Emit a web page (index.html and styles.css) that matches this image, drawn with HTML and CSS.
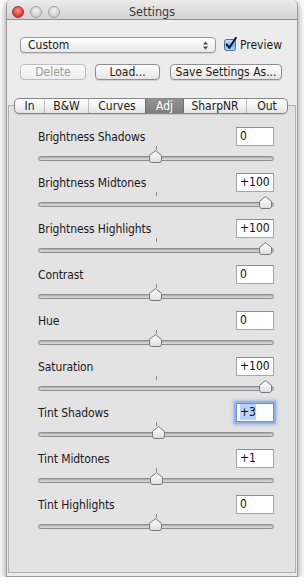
FILE: index.html
```html
<!DOCTYPE html>
<html>
<head>
<meta charset="utf-8">
<link rel="stylesheet" href="styles.css">
</head>
<body>
<svg class="defs" width="0" height="0">
  <defs>
    <linearGradient id="tg" x1="0" y1="0" x2="0" y2="1">
      <stop offset="0" stop-color="#ffffff"/>
      <stop offset="1" stop-color="#dedede"/>
    </linearGradient>
    <symbol id="thumb" viewBox="0 0 13 13">
      <path d="M6.5 0.6 L12.5 5.4 L12.5 10.2 Q12.5 12.5 10.2 12.5 L2.8 12.5 Q0.5 12.5 0.5 10.2 L0.5 5.4 Z" fill="url(#tg)" stroke="#777"/>
    </symbol>
  </defs>
</svg>
<div class="window">
  <div class="titlebar">
    <div class="lights">
      <span class="light close"></span>
      <span class="light"></span>
      <span class="light"></span>
    </div>
    <div class="title">Settings</div>
    <div></div>
  </div>
  <div class="top">
    <div class="popup">
      <span>Custom</span>
      <svg class="arrows" width="7" height="9" viewBox="0 0 7 9"><path d="M3.5 0.5 L6 3.5 L1 3.5 Z M3.5 8.5 L6 5.5 L1 5.5 Z" fill="#444"/></svg>
    </div>
    <div class="check">
      <svg class="cbox" width="14" height="14" viewBox="0 0 14 14">
        <defs>
          <linearGradient id="cg" x1="0" y1="0" x2="0" y2="1">
            <stop offset="0" stop-color="#cfe3fa"/>
            <stop offset="0.5" stop-color="#7fb2ee"/>
            <stop offset="1" stop-color="#a9d2fb"/>
          </linearGradient>
        </defs>
        <rect x="0.5" y="2.5" width="11" height="11" rx="2" fill="url(#cg)" stroke="#4a6fa5"/>
        <path d="M2.8 7.6 L5.4 10.8 L11.8 1" fill="none" stroke="#0d1a33" stroke-width="2.1" stroke-linecap="round" stroke-linejoin="round"/>
      </svg>
      <span>Preview</span>
    </div>
  </div>
  <div class="buttons">
    <span class="btn del disabled">Delete</span>
    <span class="btn load">Load...</span>
    <span class="btn save">Save Settings As...</span>
  </div>
  <div class="tabs">
    <span class="tab t-in">In</span>
    <span class="tab t-bw">B&amp;W</span>
    <span class="tab t-curves">Curves</span>
    <span class="tab t-adj sel">Adj</span>
    <span class="tab t-sharp">SharpNR</span>
    <span class="tab t-out">Out</span>
  </div>
  <div class="group">
    <div class="row">
      <div class="head"><span class="label">Brightness Shadows</span><span class="field">0</span></div>
      <div class="slider"><span class="tick"></span><div class="track"></div><svg class="thumb" style="left:111px"><use href="#thumb"/></svg></div>
    </div>
    <div class="row">
      <div class="head"><span class="label">Brightness Midtones</span><span class="field">+100</span></div>
      <div class="slider"><span class="tick"></span><div class="track"></div><svg class="thumb" style="left:221px"><use href="#thumb"/></svg></div>
    </div>
    <div class="row">
      <div class="head"><span class="label">Brightness Highlights</span><span class="field">+100</span></div>
      <div class="slider"><span class="tick"></span><div class="track"></div><svg class="thumb" style="left:221px"><use href="#thumb"/></svg></div>
    </div>
    <div class="row">
      <div class="head"><span class="label">Contrast</span><span class="field">0</span></div>
      <div class="slider"><span class="tick"></span><div class="track"></div><svg class="thumb" style="left:111px"><use href="#thumb"/></svg></div>
    </div>
    <div class="row">
      <div class="head"><span class="label">Hue</span><span class="field">0</span></div>
      <div class="slider"><span class="tick"></span><div class="track"></div><svg class="thumb" style="left:111px"><use href="#thumb"/></svg></div>
    </div>
    <div class="row">
      <div class="head"><span class="label">Saturation</span><span class="field">+100</span></div>
      <div class="slider"><span class="tick"></span><div class="track"></div><svg class="thumb" style="left:221px"><use href="#thumb"/></svg></div>
    </div>
    <div class="row">
      <div class="head"><span class="label">Tint Shadows</span><span class="field focus"><span class="selection">+3</span></span></div>
      <div class="slider"><span class="tick"></span><div class="track"></div><svg class="thumb" style="left:114px"><use href="#thumb"/></svg></div>
    </div>
    <div class="row">
      <div class="head"><span class="label">Tint Midtones</span><span class="field">+1</span></div>
      <div class="slider"><span class="tick"></span><div class="track"></div><svg class="thumb" style="left:112px"><use href="#thumb"/></svg></div>
    </div>
    <div class="row">
      <div class="head"><span class="label">Tint Highlights</span><span class="field">0</span></div>
      <div class="slider"><span class="tick"></span><div class="track"></div><svg class="thumb" style="left:111px"><use href="#thumb"/></svg></div>
    </div>
  </div>
</div>
</body>
</html>
```

FILE: styles.css
```css
* { box-sizing: border-box; }
html, body { margin: 0; padding: 0; background: #fff; }
body {
  font-family: "DejaVu Sans Condensed", "DejaVu Sans", sans-serif;
  font-stretch: condensed;
  font-size: 12px;
  color: #1a1a1a;
}
.defs { position: absolute; width: 0; height: 0; overflow: hidden; }
.window {
  margin-left: 6px;
  width: 292px;
  border: 1px solid #9a9a9a;
  border-top: 0;
  border-radius: 5px 5px 0 0;
  background: #ececec;
  box-shadow: 0 3px 9px rgba(0,0,0,0.45);
  padding-bottom: 3px;
  overflow: hidden;
}
.titlebar {
  height: 20px;
  border-bottom: 1px solid #8f8f8f;
  background: linear-gradient(#ececec, #d3d3d3);
  display: grid;
  grid-template-columns: 1fr auto 1fr;
  align-items: start;
  padding-top: 6px;
}
.lights { display: flex; gap: 6px; padding-left: 5px; }
.light {
  width: 12px; height: 12px; border-radius: 50%;
  background: radial-gradient(circle at 50% 35%, #f4f4f4 0%, #d6d6d6 55%, #c2c2c2 100%);
  border: 1px solid #a2a2a2;
}
.light.close {
  background: radial-gradient(circle at 50% 35%, #ff9a90 0%, #e8453c 55%, #c92a22 100%);
  border-color: #a8302a;
}
.title {
  font-size: 12.5px;
  line-height: 12px;
  color: #3a3a3a;
}
.top {
  display: flex;
  align-items: center;
  padding: 17px 0 0 13px;
}
.popup {
  width: 196px;
  height: 16px;
  border: 1px solid #999;
  border-radius: 4px;
  background: linear-gradient(#ffffff, #f3f3f3 50%, #e8e8e8);
  box-shadow: 0 1px 1px rgba(0,0,0,0.12);
  display: flex;
  align-items: center;
  justify-content: space-between;
  padding: 0 6px 0 7px;
  line-height: 14px;
}
.arrows { display: block; }
.check {
  display: flex;
  align-items: center;
  gap: 2px;
  margin-left: 8px;
  margin-top: -3px;
}
.check span { margin-top: 3px; }
.cbox { display: block; }
.buttons {
  display: flex;
  padding-left: 13px;
  margin-top: 11px;
}
.btn {
  height: 16px;
  line-height: 14px;
  border: 1px solid #8e8e8e;
  border-radius: 4px;
  background: linear-gradient(#ffffff, #f1f1f1 50%, #e6e6e6);
  box-shadow: 0 1px 1px rgba(0,0,0,0.12);
  text-align: center;
}
.btn.disabled {
  color: #9c9c9c;
  border-color: #bdbdbd;
  background: linear-gradient(#f9f9f9, #eeeeee);
  box-shadow: none;
}
.del { width: 66px; }
.load { width: 65px; margin-left: 9px; }
.save { width: 112px; margin-left: 10px; }
.tabs {
  position: relative;
  z-index: 1;
  display: flex;
  width: 274px;
  height: 16px;
  margin: 18px 0 0 7px;
  border: 1px solid #858585;
  border-radius: 5px;
  background: linear-gradient(#ffffff, #f2f2f2 50%, #e4e4e4);
  box-shadow: 0 1px 1px rgba(0,0,0,0.12);
  overflow: hidden;
}
.tab {
  text-align: center;
  line-height: 14px;
  border-left: 1px solid #bcbcbc;
}
.tab:first-child { border-left: 0; }
.tab.sel {
  background: linear-gradient(#939393, #7e7e7e);
  color: #fff;
  border-left-color: #6f6f6f;
}
.tab.sel + .tab { border-left-color: #6f6f6f; }
.t-in { width: 29px; }
.t-bw { width: 44px; }
.t-curves { width: 57px; }
.t-adj { width: 38px; }
.t-sharp { width: 63px; }
.t-out { flex: 1; }
.group {
  margin: -9px 0 0 1px;
  width: 288px;
  border: 1px solid #b2b2b2;
  background: #e3e3e3;
  padding: 21px 21px 31px 29px;
}
.row { height: 46px; }
.head {
  display: flex;
  justify-content: space-between;
  align-items: center;
  height: 19px;
}
.label { letter-spacing: -0.1px; }
.field {
  width: 38px;
  height: 19px;
  background: #fff;
  border: 1px solid #a6a6a6;
  border-top-color: #8c8c8c;
  padding-left: 3px;
  line-height: 17px;
  color: #111;
}
.field.focus {
  border-color: #6b8fc9;
  box-shadow: 0 0 0 2px #8fb4ea, 0 0 3px 3px rgba(110,150,220,0.5);
}
.selection { background: #b5d3f7; padding: 1px 0; }
.slider {
  position: relative;
  height: 27px;
  padding-top: 10px;
}
.tick {
  position: absolute;
  left: 118px;
  top: 0;
  width: 1px;
  height: 4px;
  background: #8a8a8a;
}
.track {
  height: 5px;
  border: 1px solid #8d8d8d;
  border-radius: 3px;
  background: linear-gradient(#a9a9a9, #cfcfcf 60%, #dadada);
}
.thumb {
  position: absolute;
  top: 4px;
  width: 13px;
  height: 13px;
  overflow: visible;
}
```
